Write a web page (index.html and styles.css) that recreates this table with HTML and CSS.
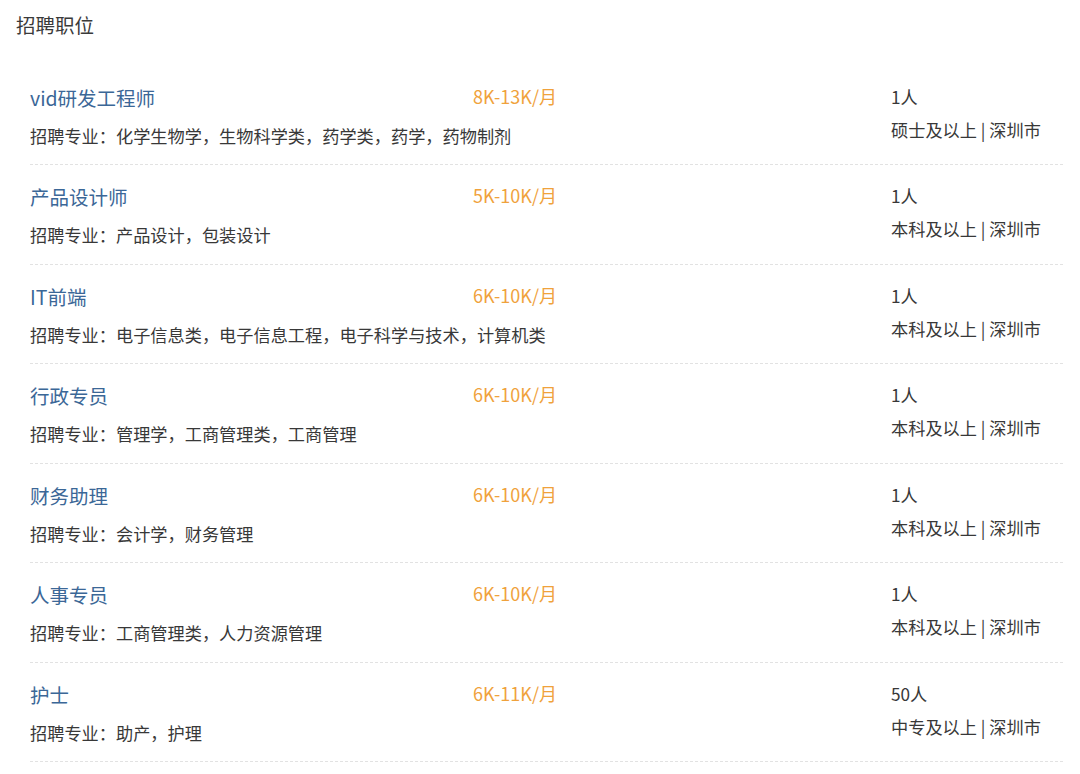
FILE: index.html
```html
<!DOCTYPE html>
<html lang="zh-CN">
<head>
<meta charset="utf-8">
<title>招聘职位</title>
<link rel="stylesheet" href="styles.css">
</head>
<body>
<div class="page">
  <h2 class="section-title">招聘职位</h2>
  <ul class="job-list">
    <li class="job">
      <div class="job-main">
        <a class="job-name">vid研发工程师</a>
        <p class="job-major">招聘专业：化学生物学，生物科学类，药学类，药学，药物制剂</p>
      </div>
      <div class="job-salary">8K-13K/月</div>
      <div class="job-meta">
        <p class="job-count">1人</p>
        <p class="job-req">硕士及以上 | 深圳市</p>
      </div>
    </li>
    <li class="job">
      <div class="job-main">
        <a class="job-name">产品设计师</a>
        <p class="job-major">招聘专业：产品设计，包装设计</p>
      </div>
      <div class="job-salary">5K-10K/月</div>
      <div class="job-meta">
        <p class="job-count">1人</p>
        <p class="job-req">本科及以上 | 深圳市</p>
      </div>
    </li>
    <li class="job">
      <div class="job-main">
        <a class="job-name">IT前端</a>
        <p class="job-major">招聘专业：电子信息类，电子信息工程，电子科学与技术，计算机类</p>
      </div>
      <div class="job-salary">6K-10K/月</div>
      <div class="job-meta">
        <p class="job-count">1人</p>
        <p class="job-req">本科及以上 | 深圳市</p>
      </div>
    </li>
    <li class="job">
      <div class="job-main">
        <a class="job-name">行政专员</a>
        <p class="job-major">招聘专业：管理学，工商管理类，工商管理</p>
      </div>
      <div class="job-salary">6K-10K/月</div>
      <div class="job-meta">
        <p class="job-count">1人</p>
        <p class="job-req">本科及以上 | 深圳市</p>
      </div>
    </li>
    <li class="job">
      <div class="job-main">
        <a class="job-name">财务助理</a>
        <p class="job-major">招聘专业：会计学，财务管理</p>
      </div>
      <div class="job-salary">6K-10K/月</div>
      <div class="job-meta">
        <p class="job-count">1人</p>
        <p class="job-req">本科及以上 | 深圳市</p>
      </div>
    </li>
    <li class="job">
      <div class="job-main">
        <a class="job-name">人事专员</a>
        <p class="job-major">招聘专业：工商管理类，人力资源管理</p>
      </div>
      <div class="job-salary">6K-10K/月</div>
      <div class="job-meta">
        <p class="job-count">1人</p>
        <p class="job-req">本科及以上 | 深圳市</p>
      </div>
    </li>
    <li class="job">
      <div class="job-main">
        <a class="job-name">护士</a>
        <p class="job-major">招聘专业：助产，护理</p>
      </div>
      <div class="job-salary">6K-11K/月</div>
      <div class="job-meta">
        <p class="job-count">50人</p>
        <p class="job-req">中专及以上 | 深圳市</p>
      </div>
    </li>
  </ul>
</div>
</body>
</html>
```

FILE: styles.css
```css
html, body {
  margin: 0;
  padding: 0;
  background: #ffffff;
}

body {
  font-family: "Noto Sans CJK SC", "Noto Sans", sans-serif;
  color: #333333;
}

.page {
  width: 1080px;
}

.section-title {
  margin: 0;
  padding: 10px 0 0 16px;
  height: 65.5px;
  box-sizing: border-box;
  font-size: 19.5px;
  font-weight: normal;
  line-height: 30px;
  color: #3a3a3a;
}

.job-list {
  list-style: none;
  margin: 0 17px 0 30px;
  padding: 0;
}

.job {
  display: grid;
  grid-template-columns: 443px 418px 1fr;
  padding: 17px 0 13.5px;
  border-bottom: 1px dashed #e2e2e2;
}

.job-main {
  min-width: 0;
}

.job-name {
  display: block;
  font-size: 19.5px;
  line-height: 30px;
  color: #3b6797;
  text-decoration: none;
}

.job-major {
  margin: 8px 0 0;
  font-size: 17.2px;
  line-height: 30px;
  white-space: nowrap;
  color: #383838;
}

.job-salary {
  font-size: 18px;
  line-height: 26px;
  color: #f0a23c;
}

.job-meta p {
  margin: 0;
  font-size: 17.2px;
  line-height: 26px;
  color: #383838;
}

.job-meta .job-count {
  padding-top: 1px;
}

.job-meta .job-req {
  margin-top: 7px;
  white-space: nowrap;
}
```
